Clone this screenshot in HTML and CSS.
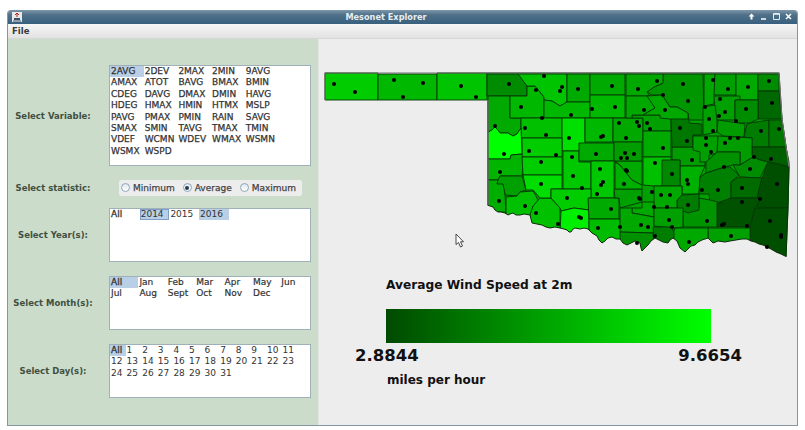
FILE: index.html
```html
<!DOCTYPE html>
<html lang="en">
<head>
<meta charset="utf-8">
<title>Mesonet Explorer</title>
<link rel="stylesheet" href="styles.css">
</head>
<body>
<div class="window">
  <header class="titlebar">
    <svg class="app-icon" viewBox="0 0 10 10" width="10" height="10"><rect width="10" height="10" fill="#e8e8e8"/><path d="M5 1v4M3 3l2-2 2 2" stroke="#b3261e" fill="none"/><path d="M2 6h6v2H2z" fill="#36506a"/><path d="M1 9h8" stroke="#36506a"/></svg>
    <span class="title">Mesonet Explorer</span>
    <div class="controls">
      <svg viewBox="0 0 7 7" width="7" height="7"><path d="M3.5 0.5L6.5 3.5H4.5V6.5H2.5V3.5H0.5Z" fill="#fff"/></svg>
      <svg viewBox="0 0 7 7" width="7" height="7"><path d="M1 6H6" stroke="#fff" stroke-width="1.5"/></svg>
      <svg viewBox="0 0 7 7" width="7" height="7"><path d="M.5.5H6.5V6.5H.5Z" fill="none" stroke="#e4eaef"/><path d="M.5 1.2H6.5" stroke="#fff"/></svg>
      <svg viewBox="0 0 7 7" width="7" height="7"><path d="M1 1L6 6M6 1L1 6" stroke="#fff" stroke-width="1.5"/></svg>
    </div>
  </header>
  <nav class="menubar"><span>File</span></nav>
  <main class="content">
    <aside class="sidebar">
      <div class="row row-variable">
        <label class="label">Select Variable:</label>
        <div class="list list-variable cols-var">
          <span class="sel">2AVG</span><span>2DEV</span><span>2MAX</span><span>2MIN</span><span>9AVG</span>
          <span>AMAX</span><span>ATOT</span><span>BAVG</span><span>BMAX</span><span>BMIN</span>
          <span>CDEG</span><span>DAVG</span><span>DMAX</span><span>DMIN</span><span>HAVG</span>
          <span>HDEG</span><span>HMAX</span><span>HMIN</span><span>HTMX</span><span>MSLP</span>
          <span>PAVG</span><span>PMAX</span><span>PMIN</span><span>RAIN</span><span>SAVG</span>
          <span>SMAX</span><span>SMIN</span><span>TAVG</span><span>TMAX</span><span>TMIN</span>
          <span>VDEF</span><span>WCMN</span><span>WDEV</span><span>WMAX</span><span>WSMN</span>
          <span>WSMX</span><span>WSPD</span>
        </div>
      </div>
      <div class="row row-stat">
        <label class="label">Select statistic:</label>
        <div class="radios">
          <span class="radio"><i class="dot"></i>Minimum</span>
          <span class="radio"><i class="dot on"></i>Average</span>
          <span class="radio"><i class="dot"></i>Maximum</span>
        </div>
      </div>
      <div class="row row-year">
        <label class="label">Select Year(s):</label>
        <div class="list list-small cols-year">
          <span class="strong">All</span><span class="sel focus">2014</span><span>2015</span><span class="sel">2016</span>
        </div>
      </div>
      <div class="row row-small">
        <label class="label">Select Month(s):</label>
        <div class="list list-small cols-month">
          <span class="sel strong">All</span><span>Jan</span><span>Feb</span><span>Mar</span><span>Apr</span><span>May</span><span>Jun</span>
          <span>Jul</span><span>Aug</span><span>Sept</span><span>Oct</span><span>Nov</span><span>Dec</span>
        </div>
      </div>
      <div class="row row-small">
        <label class="label">Select Day(s):</label>
        <div class="list list-small cols-day">
          <span class="sel strong">All</span><span>1</span><span>2</span><span>3</span><span>4</span><span>5</span><span>6</span><span>7</span><span>8</span><span>9</span><span>10</span><span>11</span>
          <span>12</span><span>13</span><span>14</span><span>15</span><span>16</span><span>17</span><span>18</span><span>19</span><span>20</span><span>21</span><span>22</span><span>23</span>
          <span>24</span><span>25</span><span>26</span><span>27</span><span>28</span><span>29</span><span>30</span><span>31</span>
        </div>
      </div>
    </aside>
    <section class="panel">
      <div class="map-wrap">
      <svg class="map" viewBox="320 70 475 190" width="475" height="190">
        <g class="counties">
          <path fill="#00a000" d="M487 73H779L782 119L789 167L788 208L786 258H488V100L487 73Z"/>
          <path fill="#00cc00" d="M325 73H378V100H325Z"/>
          <path fill="#00b800" d="M378 74H437V100H378Z"/>
          <path fill="#00c400" d="M437 73H487V100H437Z"/>
          <path fill="#008c00" d="M487 74H518L527 86V96H487Z"/>
          <path fill="#00aa00" d="M488 96H510V118H521V128L517 134L513 136L508 133L500 133L497 129L495 127L492 130L488 132Z"/>
          <path fill="#00b800" d="M510 96H527V86H535L544 97V118H510Z"/>
          <path fill="#00c400" d="M518 74H567V102L560 106L552 101L544 100V97L535 86H527Z"/>
          <path fill="#00aa00" d="M567 74H590V102H567Z"/>
          <path fill="#00b800" d="M544 100L552 101L560 106L567 102H590V118H544Z"/>
          <path fill="#00aa00" d="M590 74H625V95H590Z"/>
          <path fill="#00b800" d="M590 95H625V118H590Z"/>
          <path fill="#00c000" d="M521 118H562V138H521Z"/>
          <path fill="#00e000" d="M562 118H585V151H562Z"/>
          <path fill="#00b800" d="M585 118H613V142H585Z"/>
          <path fill="#00a800" d="M613 118H643V142H613Z"/>
          <path fill="#00cc00" d="M522 138H562V157H522Z"/>
          <path fill="#00ff00" d="M488 132L492 130L495 127L497 129L500 133L508 133L513 136L517 134L521 128L522 154L511 155L510 159H488Z"/>
          <path fill="#00b400" d="M488 159H510L511 155L522 154L523 165L522 176H500L498 180H488Z"/>
          <path fill="#00a000" d="M500 176H522L526 190L520 192L517 196L505 195L503 185L493 184L498 180Z"/>
          <path fill="#00ae00" d="M488 180H498L497 184H503L505 195L506 212H488Z"/>
          <path fill="#00c000" d="M506 197L517 196L520 192L533 191L537 198L538 202L533 206L532 222H506Z"/>
          <path fill="#00c000" d="M540 198L551 198L560 208V235H530V215L533 206Z"/>
          <path fill="#00cc00" d="M522 157H562V175H523Z"/>
          <path fill="#00dd00" d="M523 175H562V189H551V198H540L533 190L526 190Z"/>
          <path fill="#00c800" d="M563 151H579V162H591V189H563Z"/>
          <path fill="#00aa00" d="M579 143H614V161H579Z"/>
          <path fill="#00c800" d="M591 161H614V198H591Z"/>
          <path fill="#00cc00" d="M551 189H591V198H589V210L574 208L561 211L560 208L551 198Z"/>
          <path fill="#00ee00" d="M561 211L574 208L589 210V236H560Z"/>
          <path fill="#00aa00" d="M588 198H619V219H589Z"/>
          <path fill="#00bc00" d="M589 219H620L621 232V250H589Z"/>
          <path fill="#00a000" d="M614 189H642V202L620 208L619 198H615Z"/>
          <path fill="#00b000" d="M615 162L620 165L632 180L642 185V189H615Z"/>
          <path fill="#00aa00" d="M615 161H642V185L632 180L620 165Z"/>
          <path fill="#009c00" d="M614 142H642V161H614Z"/>
          <path fill="#00a000" d="M632 115H671V131H643V118H632Z"/>
          <path fill="#00aa00" d="M643 131H671V157H643Z"/>
          <path fill="#00c000" d="M643 157H671V186H654L643 185Z"/>
          <path fill="#009c00" d="M672 147H693V135H700V147H705V166H680V160H672Z"/>
          <path fill="#00b000" d="M680 166H705L700 177L699 194L682 194V186H680Z"/>
          <path fill="#008800" d="M662 160H680V186H662Z"/>
          <path fill="#007800" d="M671 118H689V123L702 124V135H693V147H672Z"/>
          <path fill="#009600" d="M663 74H703L704 120H689L688 113L677 107H670L662 95H652L647 92L654 87L663 83Z"/>
          <path fill="#00a800" d="M626 74H663V83L654 87L647 92L650 96H626Z"/>
          <path fill="#00a800" d="M626 96H650L655 108L643 115H632V118H626Z"/>
          <path fill="#00a800" d="M647 96L662 95L670 107H677L688 113V119H670L660 118V115H643L655 108Z"/>
          <path fill="#00a800" d="M704 74H715L714 104L704 106Z"/>
          <path fill="#00a000" d="M715 74H736V95H714Z"/>
          <path fill="#00aa00" d="M736 74H758V100H736Z"/>
          <path fill="#008c00" d="M758 74H779V91H758Z"/>
          <path fill="#006800" d="M758 91H779L782 119H758Z"/>
          <path fill="#00a000" d="M714 96H740V100H735V120H718L715 118Z"/>
          <path fill="#008c00" d="M735 100H758V119L750 123H735Z"/>
          <path fill="#00a000" d="M703 107L715 105L717 120V132L703 135Z"/>
          <path fill="#009c00" d="M718 120L745 124L744 137L723 136L717 132Z"/>
          <path fill="#007c00" d="M747 124L750 123L769 120V147H752V138L744 137Z"/>
          <path fill="#007800" d="M769 120H782L786 147H769Z"/>
          <path fill="#006000" d="M752 147H786L789 162V167L780 164L768 162L760 160L753 157Z"/>
          <path fill="#00a000" d="M693 136H718V153L709 155V162H700V152L693 150Z"/>
          <path fill="#009c00" d="M718 136L752 138V155L753 157L740 165V152H717Z"/>
          <path fill="#009000" d="M706 162L717 152H740V165H733L725 167L706 173Z"/>
          <path fill="#008000" d="M700 177L706 173L725 167H730L739 175L731 182V198L722 203L710 202L709 194H699Z"/>
          <path fill="#008c00" d="M733 165H740L753 157L760 160L768 162L760 178L740 177Z"/>
          <path fill="#006c00" d="M739 177L762 178L757 198H731V182Z"/>
          <path fill="#004f00" d="M768 162L780 165L789 167L788 208H757V198L762 178Z"/>
          <path fill="#005200" d="M717 203L731 198H762L755 208L750 227H717Z"/>
          <path fill="#004e00" d="M755 208H788L786 258H750V227Z"/>
          <path fill="#00a000" d="M708 228H750V255H708Z"/>
          <path fill="#00a800" d="M673 234L675 228H708V256H673Z"/>
          <path fill="#009400" d="M699 198L710 200L722 203H717V227H683V208H699Z"/>
          <path fill="#007c00" d="M677 200L682 195L699 194V210L688 213L677 208Z"/>
          <path fill="#00a800" d="M654 186H682V195L677 200V208H654Z"/>
          <path fill="#00a800" d="M642 202H654V217L632 213V208H642Z"/>
          <path fill="#00a800" d="M620 208H632V213L654 217V233L620 232Z"/>
          <path fill="#00a000" d="M654 208H683V227L673 228L654 226Z"/>
          <path fill="#009000" d="M620 232L653 233L655 255H620Z"/>
          <path fill="#007c00" d="M653 227H672L674 233V250H655Z"/>
        </g>
        <path class="outside" d="M487 205L490 206L493 207L495 210L498 212L501 212L505 213L508 215L510 214L513 213L516 215L520 215L524 214L530 215L531 219L532 223L537 224L542 225L546 227L550 228L555 227L560 228L564 229L567 230L569 232L571 232L573 229L575 228L580 229L584 228L588 229L592 233L597 236L599 240L602 243L605 241L608 238L612 237L616 239L620 239L623 243L627 245L631 243L635 241L638 242L640 243L641 248L642 251L645 248L648 245L651 241L655 238L659 240L663 242L668 243L670 240L673 238L677 241L680 248L685 252L688 249L691 246L695 245L698 242L702 240L708 238L711 241L713 243L718 241L725 242L730 241L736 240L742 239L747 239L751 241L755 242L759 244L763 245L767 247L771 249L776 252L781 254L787 257V260H487Z"/>
        <path class="coast" d="M487.5 205L490 206L493 207L495 210L498 212L501 212L505 213L508 215L510 214L513 213L516 215L520 215L524 214L530 215L531 219L532 223L537 224L542 225L546 227L550 228L555 227L560 228L564 229L567 230L569 232L571 232L573 229L575 228L580 229L584 228L588 229L592 233L597 236L599 240L602 243L605 241L608 238L612 237L616 239L620 239L623 243L627 245L631 243L635 241L638 242L640 243L641 248L642 251L645 248L648 245L651 241L655 238L659 240L663 242L668 243L670 240L673 238L677 241L680 248L685 252L688 249L691 246L695 245L698 242L702 240L708 238L711 241L713 243L718 241L725 242L730 241L736 240L742 239L747 239L751 241L755 242L759 244L763 245L767 247L771 249L776 252L781 254L786 256.5"/>
        <path class="edge" d="M325 100V73H779L782 119L789 167M488 100V205"/>
        <g class="dots">
          <circle cx="334" cy="84"/><circle cx="355" cy="92"/><circle cx="394" cy="80"/><circle cx="423" cy="83"/><circle cx="403" cy="97"/><circle cx="461" cy="86"/><circle cx="476" cy="97"/>
          <circle cx="509" cy="84"/><circle cx="544" cy="76"/><circle cx="536" cy="90"/><circle cx="562" cy="87"/><circle cx="560" cy="91"/><circle cx="578" cy="89"/><circle cx="612" cy="86"/><circle cx="638" cy="89"/><circle cx="521" cy="107"/><circle cx="571" cy="115"/><circle cx="592" cy="109"/><circle cx="615" cy="107"/><circle cx="542" cy="118"/><circle cx="495" cy="126"/><circle cx="525" cy="128"/><circle cx="619" cy="123"/><circle cx="637" cy="122"/><circle cx="639" cy="126"/><circle cx="546" cy="135"/><circle cx="569" cy="138"/><circle cx="603" cy="136"/><circle cx="601" cy="137"/><circle cx="626" cy="138"/><circle cx="529" cy="151"/><circle cx="504" cy="154"/><circle cx="596" cy="154"/><circle cx="556" cy="155"/><circle cx="572" cy="157"/><circle cx="625" cy="153"/><circle cx="634" cy="154"/><circle cx="621" cy="158"/><circle cx="627" cy="158"/><circle cx="541" cy="162"/>
          <circle cx="500" cy="172"/><circle cx="573" cy="176"/><circle cx="541" cy="184"/><circle cx="582" cy="188"/><circle cx="600" cy="169"/><circle cx="603" cy="182"/><circle cx="601" cy="185"/><circle cx="597" cy="194"/><circle cx="626" cy="170"/><circle cx="627" cy="171"/><circle cx="624" cy="184"/><circle cx="639" cy="198"/><circle cx="567" cy="198"/><circle cx="499" cy="201"/><circle cx="525" cy="206"/><circle cx="536" cy="213"/><circle cx="558" cy="224"/><circle cx="579" cy="217"/><circle cx="581" cy="218"/><circle cx="611" cy="209"/><circle cx="598" cy="228"/><circle cx="620" cy="227"/>
          <circle cx="657" cy="81"/><circle cx="683" cy="84"/><circle cx="713" cy="80"/><circle cx="728" cy="89"/><circle cx="748" cy="87"/><circle cx="769" cy="81"/><circle cx="663" cy="95"/><circle cx="688" cy="101"/><circle cx="720" cy="99"/><circle cx="705" cy="107"/><circle cx="772" cy="103"/><circle cx="746" cy="109"/><circle cx="725" cy="112"/><circle cx="719" cy="116"/><circle cx="644" cy="110"/><circle cx="665" cy="110"/><circle cx="709" cy="119"/><circle cx="736" cy="121"/><circle cx="647" cy="123"/><circle cx="650" cy="129"/><circle cx="680" cy="128"/><circle cx="713" cy="131"/><circle cx="761" cy="131"/><circle cx="779" cy="129"/><circle cx="706" cy="138"/><circle cx="730" cy="138"/><circle cx="738" cy="138"/><circle cx="725" cy="143"/><circle cx="687" cy="141"/><circle cx="706" cy="145"/><circle cx="663" cy="148"/><circle cx="711" cy="152"/><circle cx="754" cy="157"/><circle cx="771" cy="159"/><circle cx="692" cy="160"/>
          <circle cx="655" cy="163"/><circle cx="672" cy="174"/><circle cx="687" cy="180"/><circle cx="688" cy="184"/><circle cx="724" cy="167"/><circle cx="750" cy="169"/><circle cx="777" cy="184"/><circle cx="702" cy="190"/><circle cx="718" cy="190"/><circle cx="742" cy="188"/><circle cx="640" cy="199"/><circle cx="661" cy="195"/><circle cx="670" cy="195"/><circle cx="760" cy="199"/><circle cx="688" cy="205"/><circle cx="742" cy="202"/><circle cx="654" cy="207"/><circle cx="667" cy="207"/><circle cx="669" cy="220"/><circle cx="672" cy="227"/><circle cx="641" cy="225"/><circle cx="648" cy="227"/><circle cx="707" cy="221"/><circle cx="770" cy="221"/><circle cx="724" cy="224"/><circle cx="722" cy="225"/><circle cx="747" cy="226"/><circle cx="655" cy="236"/><circle cx="731" cy="236"/><circle cx="689" cy="242"/><circle cx="781" cy="235"/><circle cx="781" cy="237"/><circle cx="767" cy="247"/><circle cx="637" cy="243"/><circle cx="652" cy="192"/>
        </g>
      </svg>
      <svg class="cursor" viewBox="0 0 10 15" width="10" height="15"><path d="M1 1V11.5L3.5 9.5L5.5 14L7.5 13L5.5 8.8H8.5Z" fill="#fff" stroke="#333" stroke-width="0.9" stroke-linejoin="round"/></svg>
      </div>
      <div class="legend">
        <h2 class="legend-title">Average Wind Speed at 2m</h2>
        <div class="ramp"></div>
        <div class="legend-values"><span>2.8844</span><span>9.6654</span></div>
        <p class="legend-units">miles per hour</p>
      </div>
    </section>
  </main>
</div>
</body>
</html>
```

FILE: styles.css
```css
* { box-sizing: border-box; }
html, body { margin: 0; padding: 0; background: #fff; }
body {
  width: 805px;
  height: 430px;
  padding: 10px 7px 4px 7px;
  overflow: hidden;
  font-family: "DejaVu Sans", sans-serif;
}
.window {
  width: 791px;
  height: 416px;
  display: flex;
  flex-direction: column;
  border: 1px solid #8595a2;
  border-top: 0;
  border-radius: 4px 4px 0 0;
  overflow: hidden;
  background: #ededed;
}
.titlebar {
  height: 14px;
  flex: none;
  display: flex;
  align-items: center;
  justify-content: center;
  position: relative;
  background: linear-gradient(#7d97ab, #4f7088 35%, #38607e);
}
.app-icon { position: absolute; left: 4px; top: 2px; }
.title {
  font-size: 8.2px;
  font-weight: 700;
  color: #e8edf0;
  padding-right: 33px;
}
.controls {
  position: absolute;
  right: 5px;
  top: 3px;
  display: flex;
  gap: 5.5px;
}
.controls svg { display: block; }
.menubar {
  height: 15px;
  flex: none;
  padding: 0 0 0 4px;
  font-size: 8.5px;
  font-weight: 700;
  color: #3a3a3a;
  line-height: 14px;
  background: linear-gradient(#f6f6f6, #e2e2e2);
  border-bottom: 1px solid #d5d8d5;
}
.content { flex: 1; display: flex; min-height: 0; }
.sidebar {
  width: 311px;
  flex: none;
  background: #cbdccb;
  padding-top: 26px;
  display: flex;
  flex-direction: column;
  border-right: 1px solid #e3e6e3;
}
.row { display: flex; align-items: center; }
.row-stat { height: 15px; margin-top: 14px; }
.row-year { margin-top: 13px; }
.row-small { margin-top: 14px; }
.label {
  width: 101px;
  flex: none;
  padding-right: 11px;
  text-align: center;
  font-size: 8.5px;
  font-weight: 700;
  color: #414f41;
  white-space: nowrap;
}
.list {
  width: 202px;
  background: #fff;
  border: 1px solid #9fb0b8;
  display: grid;
  grid-auto-rows: 11.4px;
  align-content: start;
  font-size: 9px;
  line-height: 11.4px;
  color: #333;
}
.list span { white-space: nowrap; padding-left: 1px; }
.list-variable { height: 101px; -webkit-text-stroke: 0.25px #333; }
.list-small { height: 54px; }
.cols-var { grid-template-columns: repeat(5, 33.7px); }
.cols-year { grid-template-columns: repeat(4, 29.7px); }
.cols-month { grid-template-columns: repeat(7, 28.4px); -webkit-text-stroke: 0.2px #333; }
.cols-day { grid-template-columns: repeat(12, 15.6px); }
.strong { -webkit-text-stroke: 0.3px #333; }
.sel { background: #b8cfe5; }
.focus { outline: 1px solid #7f9fc9; outline-offset: -1px; }
.radios {
  margin-left: 10px;
  width: 183px;
  height: 16px;
  display: flex;
  align-items: center;
  background: #ededed;
  border-radius: 2px;
  font-size: 9px;
  color: #444;
  -webkit-text-stroke: 0.25px #444;
  padding-left: 2px;
}
.radio { display: flex; align-items: center; gap: 3px; margin-right: 8px; white-space: nowrap; }
.dot {
  width: 9px;
  height: 9px;
  border-radius: 50%;
  border: 1px solid #8fa6b8;
  background: linear-gradient(#dfe8ef, #fff);
  display: block;
  position: relative;
}
.dot.on::after {
  content: "";
  position: absolute;
  left: 1.5px;
  top: 1.5px;
  width: 4px;
  height: 4px;
  border-radius: 50%;
  background: #2a3a4a;
}
.panel { flex: 1; background: #ededed; display: flex; flex-direction: column; min-width: 0; }
.map-wrap { position: relative; flex: none; height: 190px; margin-top: 31px; margin-left: 1px; }
.map { display: block; }
.counties { stroke: #053505; stroke-width: 0.9; stroke-linejoin: round; }
.outside { fill: #ededed; stroke: none; }
.coast { fill: none; stroke: #0a2a0a; stroke-width: 1; stroke-linejoin: round; }
.edge { fill: none; stroke: #707070; stroke-width: 1.2; }
.dots circle { r: 2px; fill: #000; }
.cursor { position: absolute; left: 135px; top: 163px; }
.legend { padding-left: 67px; }
.legend-title {
  margin: 17px 0 0;
  font-size: 12.2px;
  line-height: 16px;
  font-weight: 700;
  color: #111;
}
.ramp {
  margin-top: 16px;
  width: 325px;
  height: 34px;
  background: linear-gradient(90deg, #004a00, #00ff00);
}
.legend-values {
  width: 387px;
  margin-left: -31px;
  display: flex;
  justify-content: space-between;
  font-size: 16.5px;
  line-height: 20px;
  font-weight: 700;
  color: #111;
  margin-top: 3px;
}
.legend-units {
  margin: 6px 0 0 1px;
  font-size: 12px;
  line-height: 16px;
  font-weight: 700;
  color: #111;
}
```
